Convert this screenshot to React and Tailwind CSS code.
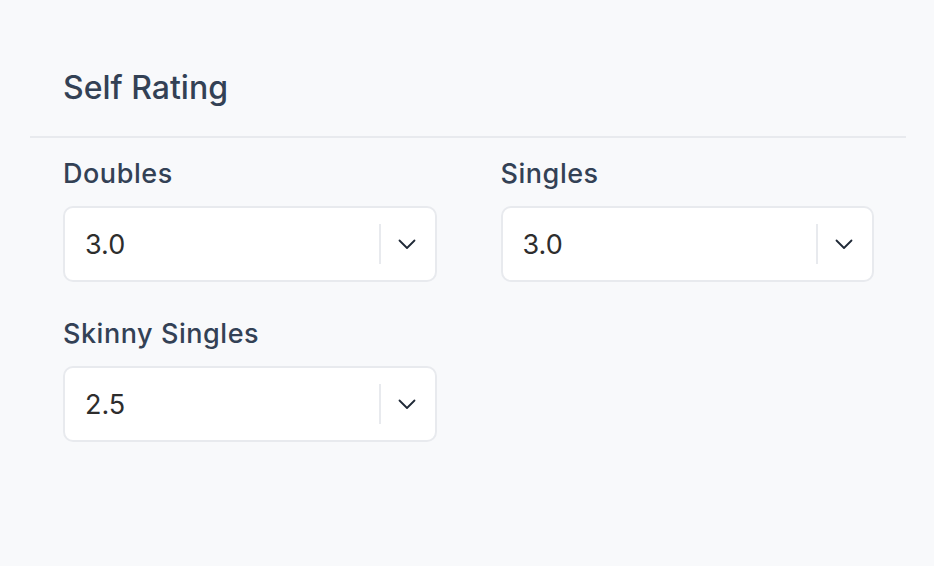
import React from "react";

function Chevron() {
  return (
    <svg width="18" height="11" viewBox="0 0 18 11" fill="none" stroke="#1f2937" strokeWidth="1.8" strokeLinecap="round" strokeLinejoin="round">
      <path d="M1.5 1.5L9 9L16.5 1.5" />
    </svg>
  );
}

function Field({ label, value }) {
  return (
    <div className="flex flex-col">
      <label className="text-[27px] leading-[36px] tracking-[0.02em] text-[#334155] font-medium">{label}</label>
      <div className="mt-[14px] h-[76px] bg-white border-2 border-[#e8eaee] rounded-[10px] flex items-center pl-[20px] pr-[19px]">
        <span className="flex-1 text-[27px] leading-[36px] pt-[2px] text-[#2d2d2d]">{value}</span>
        <div className="w-[2px] h-[40px] bg-[#e8eaee]" />
        <div className="ml-[17px] flex items-center"><Chevron /></div>
      </div>
    </div>
  );
}

export default function App() {
  return (
    <div className="w-[934px] h-[566px] bg-[#f8f9fb] pl-[30px] pr-[28px] pt-[66px]" style={{ fontFamily: "Inter, 'Noto Sans', sans-serif" }}>
      <div className="border-b-2 border-[#e8eaee] pl-[33px] pb-[26px]">
        <h2 className="text-[32px] leading-[44px] text-[#334155] font-medium">Self Rating</h2>
      </div>
      <div className="pl-[33px] pr-[32px] pt-[18px] grid grid-cols-2 gap-x-[64px] gap-y-[34px]">
        <Field label="Doubles" value="3.0" />
        <Field label="Singles" value="3.0" />
        <Field label="Skinny Singles" value="2.5" />
      </div>
    </div>
  );
}
